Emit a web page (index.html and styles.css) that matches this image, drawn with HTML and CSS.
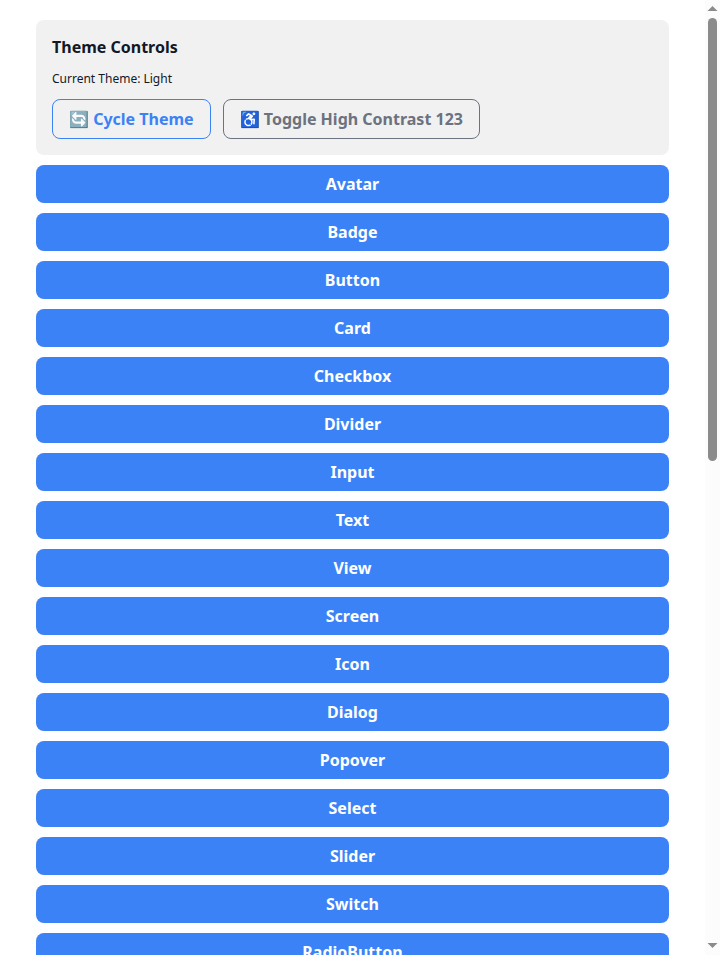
FILE: index.html
```html
<!DOCTYPE html>
<html lang="en">
<head>
<meta charset="utf-8">
<title>Components</title>
<link rel="stylesheet" href="styles.css">
</head>
<body>
<div class="app">
  <main class="content">
    <section class="panel">
      <h1 class="panel-title">Theme Controls</h1>
      <p class="panel-text">Current Theme: Light</p>
      <div class="panel-actions">
        <button class="outlined primary">🔄 Cycle Theme</button>
        <button class="outlined neutral">♿ Toggle High Contrast 123</button>
      </div>
    </section>
    <button class="nav">Avatar</button>
    <button class="nav">Badge</button>
    <button class="nav">Button</button>
    <button class="nav">Card</button>
    <button class="nav">Checkbox</button>
    <button class="nav">Divider</button>
    <button class="nav">Input</button>
    <button class="nav">Text</button>
    <button class="nav">View</button>
    <button class="nav">Screen</button>
    <button class="nav">Icon</button>
    <button class="nav">Dialog</button>
    <button class="nav">Popover</button>
    <button class="nav">Select</button>
    <button class="nav">Slider</button>
    <button class="nav">Switch</button>
    <button class="nav">RadioButton</button>
  </main>
  <div class="scrollbar">
    <svg class="arrow" viewBox="0 0 15 17"><path d="M7.5 6L12.5 11H2.5Z"/></svg>
    <div class="track"><div class="thumb"></div></div>
    <svg class="arrow" viewBox="0 0 15 17"><path d="M2.5 5H12.5L7.5 10Z"/></svg>
  </div>
</div>
</body>
</html>
```
FILE: styles.css
```css
* { box-sizing: border-box; }
body {
  margin: 0;
  background: #fff;
  color: #111827;
  font-family: "Noto Sans", sans-serif;
  overflow: hidden;
}
.app {
  display: flex;
  height: 955px;
  overflow: hidden;
}
.content {
  flex: 1;
  display: flex;
  flex-direction: column;
  gap: 10px;
  padding: 20px 36px;
}
.panel {
  flex: none;
  height: 135px;
  padding: 16px;
  border-radius: 8px;
  background: #f1f1f1;
}
.panel-title {
  margin: 0;
  font-size: 16px;
  line-height: 22px;
  font-weight: 700;
}
.panel-text {
  margin: 12px 0;
  font-size: 12px;
  line-height: 17px;
}
.panel-actions {
  display: flex;
  gap: 12px;
}
button {
  font: 700 16px/22px "Noto Sans", sans-serif;
  border-radius: 8px;
  white-space: nowrap;
}
.outlined {
  height: 40px;
  padding: 0 16px;
  border: 1px solid;
  background: transparent;
}
.primary { color: #3b82f6; }
.neutral { color: #6b7280; }
.nav {
  flex: none;
  height: 38px;
  padding: 0;
  border: 0;
  background: #3b82f6;
  color: #fff;
}
.scrollbar {
  flex: none;
  width: 15px;
  display: flex;
  flex-direction: column;
  background: #fcfcfc;
}
.arrow {
  width: 15px;
  height: 17px;
  fill: #8b8b8b;
}
.track {
  flex: 1;
  padding: 1px 3px 0;
}
.thumb {
  width: 9px;
  height: 443px;
  border-radius: 5px;
  background: #8b8b8b;
}
```
